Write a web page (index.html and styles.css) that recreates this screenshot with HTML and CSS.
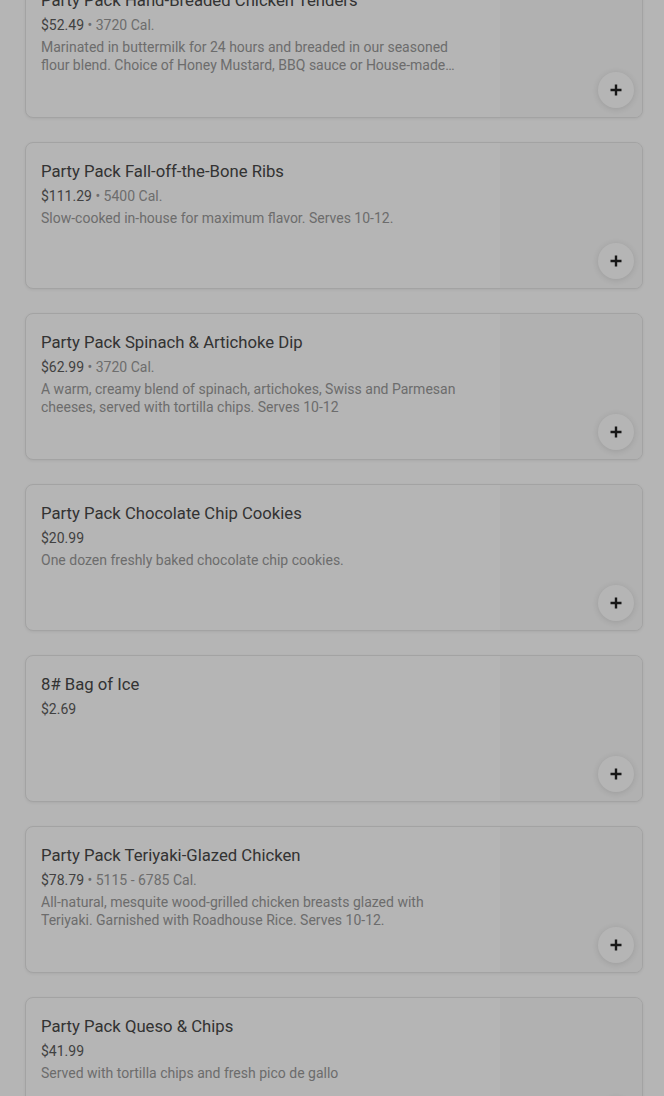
FILE: index.html
```html
<!DOCTYPE html>
<html lang="en">
<head>
<meta charset="utf-8">
<title>Menu</title>
<link rel="stylesheet" href="styles.css">
</head>
<body>
<main class="menu">
  <article class="card">
    <div class="info">
      <h3 class="title">Party Pack Hand-Breaded Chicken Tenders</h3>
      <p class="meta"><span class="price">$52.49</span> • <span class="cal">3720 Cal.</span></p>
      <p class="desc">Marinated in buttermilk for 24 hours and breaded in our seasoned flour blend. Choice of Honey Mustard, BBQ sauce or House-made Ranch dressing. Serves 10-12.</p>
    </div>
    <div class="thumb"><button class="add" aria-label="Add"><svg viewBox="0 0 12 12" width="12" height="12"><path d="M6 0.5v11M0.5 6h11" stroke="currentColor" stroke-width="2.4"/></svg></button></div>
  </article>
  <article class="card">
    <div class="info">
      <h3 class="title">Party Pack Fall-off-the-Bone Ribs</h3>
      <p class="meta"><span class="price">$111.29</span> • <span class="cal">5400 Cal.</span></p>
      <p class="desc">Slow-cooked in-house for maximum flavor. Serves 10-12.</p>
    </div>
    <div class="thumb"><button class="add" aria-label="Add"><svg viewBox="0 0 12 12" width="12" height="12"><path d="M6 0.5v11M0.5 6h11" stroke="currentColor" stroke-width="2.4"/></svg></button></div>
  </article>
  <article class="card">
    <div class="info">
      <h3 class="title">Party Pack Spinach &amp; Artichoke Dip</h3>
      <p class="meta"><span class="price">$62.99</span> • <span class="cal">3720 Cal.</span></p>
      <p class="desc">A warm, creamy blend of spinach, artichokes, Swiss and Parmesan cheeses, served with tortilla chips. Serves 10-12</p>
    </div>
    <div class="thumb"><button class="add" aria-label="Add"><svg viewBox="0 0 12 12" width="12" height="12"><path d="M6 0.5v11M0.5 6h11" stroke="currentColor" stroke-width="2.4"/></svg></button></div>
  </article>
  <article class="card">
    <div class="info">
      <h3 class="title">Party Pack Chocolate Chip Cookies</h3>
      <p class="meta"><span class="price">$20.99</span></p>
      <p class="desc">One dozen freshly baked chocolate chip cookies.</p>
    </div>
    <div class="thumb"><button class="add" aria-label="Add"><svg viewBox="0 0 12 12" width="12" height="12"><path d="M6 0.5v11M0.5 6h11" stroke="currentColor" stroke-width="2.4"/></svg></button></div>
  </article>
  <article class="card">
    <div class="info">
      <h3 class="title">8# Bag of Ice</h3>
      <p class="meta"><span class="price">$2.69</span></p>
    </div>
    <div class="thumb"><button class="add" aria-label="Add"><svg viewBox="0 0 12 12" width="12" height="12"><path d="M6 0.5v11M0.5 6h11" stroke="currentColor" stroke-width="2.4"/></svg></button></div>
  </article>
  <article class="card">
    <div class="info">
      <h3 class="title">Party Pack Teriyaki-Glazed Chicken</h3>
      <p class="meta"><span class="price">$78.79</span> • <span class="cal">5115 - 6785 Cal.</span></p>
      <p class="desc">All-natural, mesquite wood-grilled chicken breasts glazed with Teriyaki. Garnished with Roadhouse Rice. Serves 10-12.</p>
    </div>
    <div class="thumb"><button class="add" aria-label="Add"><svg viewBox="0 0 12 12" width="12" height="12"><path d="M6 0.5v11M0.5 6h11" stroke="currentColor" stroke-width="2.4"/></svg></button></div>
  </article>
  <article class="card">
    <div class="info">
      <h3 class="title">Party Pack Queso &amp; Chips</h3>
      <p class="meta"><span class="price">$41.99</span></p>
      <p class="desc">Served with tortilla chips and fresh pico de gallo</p>
    </div>
    <div class="thumb"><button class="add" aria-label="Add"><svg viewBox="0 0 12 12" width="12" height="12"><path d="M6 0.5v11M0.5 6h11" stroke="currentColor" stroke-width="2.4"/></svg></button></div>
  </article>
</main>
<div class="backdrop"></div>
</body>
</html>
```

FILE: styles.css
```css
html, body {
  margin: 0;
  padding: 0;
  background: #ffffff;
  font-family: Roboto, "Liberation Sans", Arial, sans-serif;
  overflow: hidden;
}

.menu {
  display: flex;
  flex-direction: column;
  gap: 24px;
  padding: 0 21px 0 25px;
  margin-top: -29px;
}

.card {
  display: flex;
  height: 147px;
  box-sizing: border-box;
  border: 1px solid #e6e6e6;
  border-radius: 8px;
  box-shadow: 0 1px 3px rgba(0, 0, 0, 0.07);
  background: #ffffff;
  overflow: hidden;
}

.info {
  flex: 1;
  min-width: 0;
  padding: 15px 30px 0 15px;
}

.title {
  margin: 0;
  font-size: 16.7px;
  line-height: 27px;
  font-weight: 400;
  color: #484848;
  white-space: nowrap;
  overflow: hidden;
  text-overflow: ellipsis;
}

.meta {
  margin: 1px 0 0;
  font-size: 14px;
  line-height: 20px;
  color: #9a9a9a;
}

.price {
  color: #5c5c5c;
}

.desc {
  margin: 3px 0 0;
  font-size: 14px;
  line-height: 18px;
  color: #999999;
  display: -webkit-box;
  -webkit-line-clamp: 2;
  -webkit-box-orient: vertical;
  overflow: hidden;
}

.thumb {
  width: 142px;
  flex: none;
  background: #f9f9f9;
  display: flex;
  align-items: flex-end;
  justify-content: flex-end;
  padding: 0 8px 9px 0;
  box-sizing: border-box;
}

.add {
  width: 36px;
  height: 36px;
  border-radius: 50%;
  border: none;
  background: #ffffff;
  color: #222222;
  box-shadow: 0 1px 6px rgba(0, 0, 0, 0.12);
  display: flex;
  align-items: center;
  justify-content: center;
  padding: 0;
}

.backdrop {
  position: fixed;
  inset: 0;
  background: rgba(0, 0, 0, 0.29);
}
```
